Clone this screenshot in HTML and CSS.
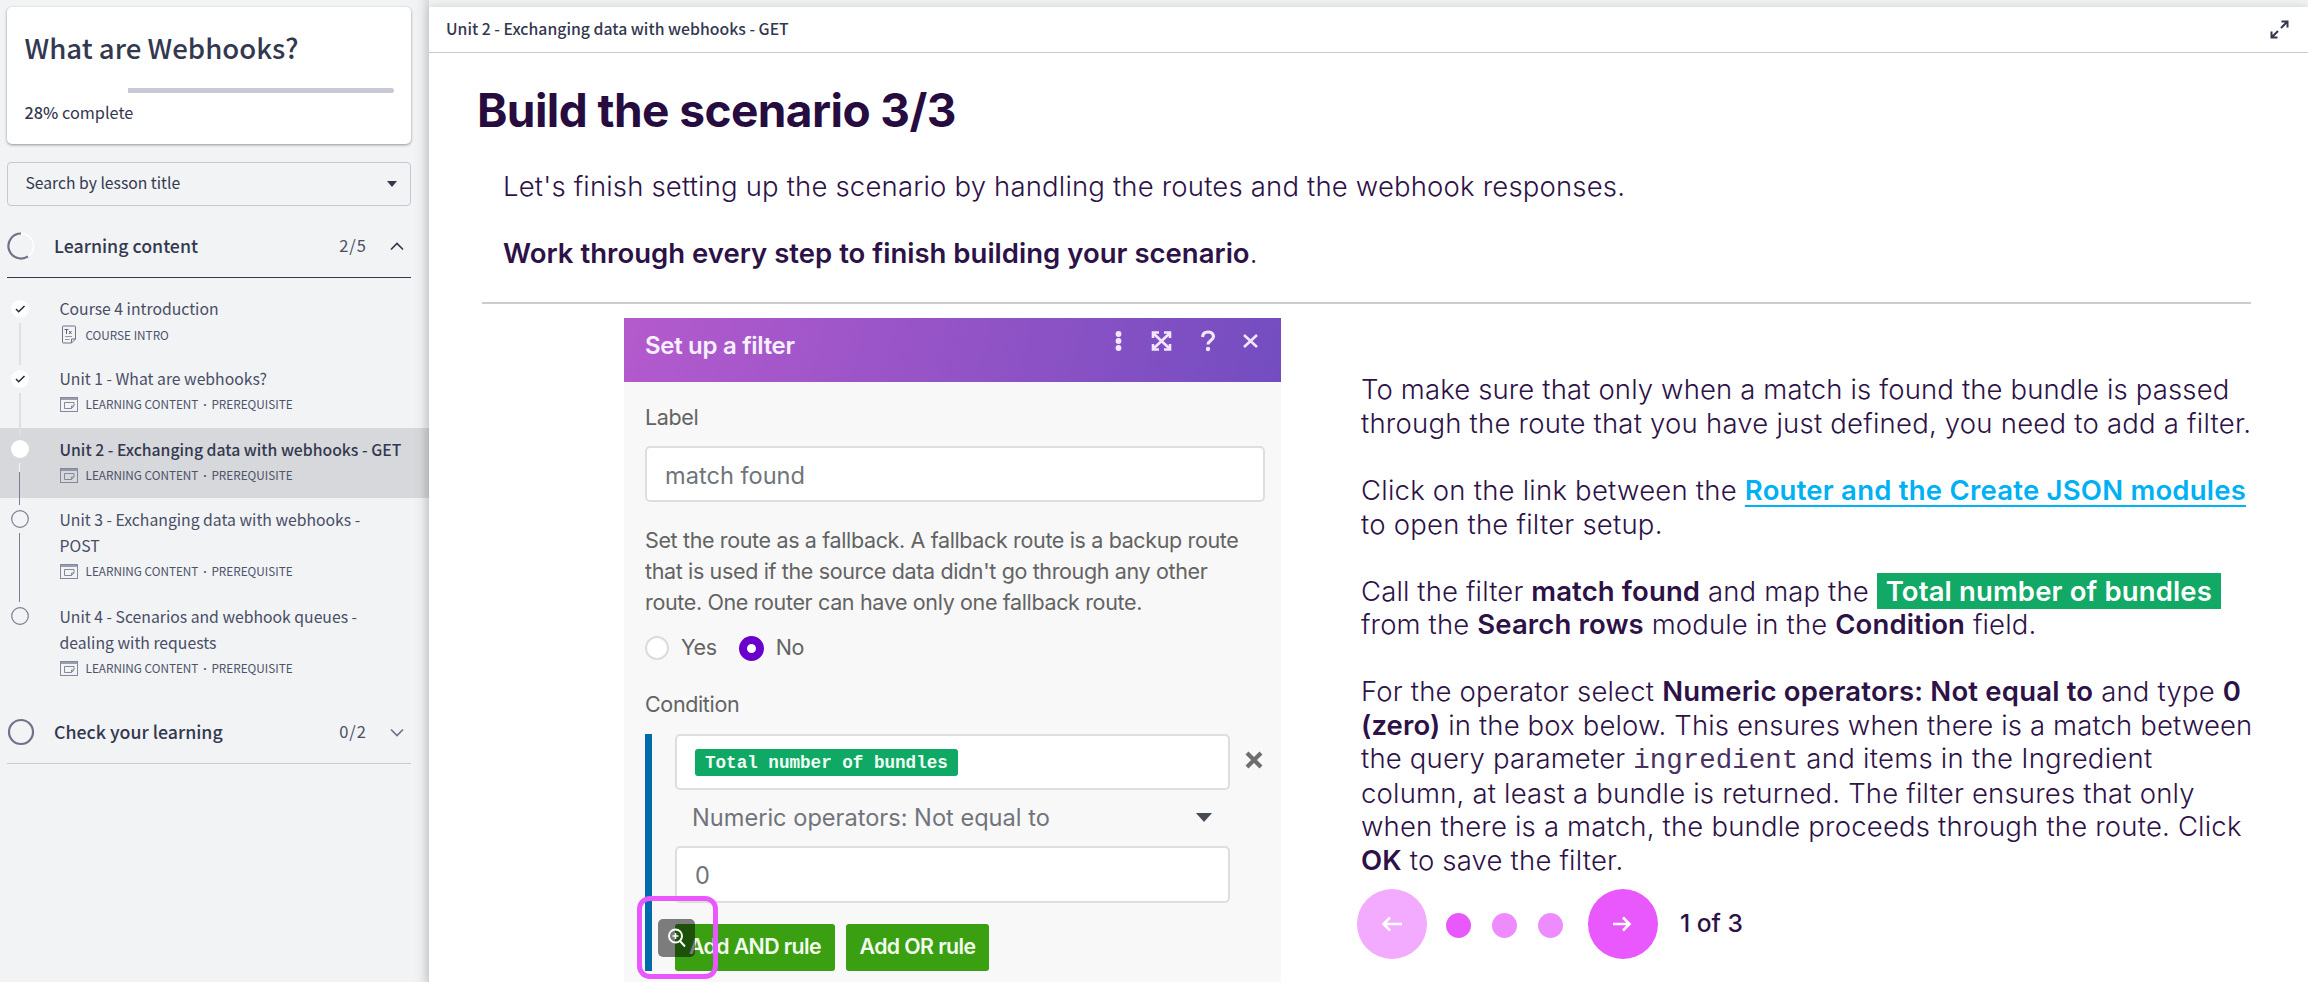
FILE: index.html
```html
<!DOCTYPE html>
<html lang="en">
<head>
<meta charset="utf-8">
<title>What are Webhooks?</title>
<link rel="stylesheet" href="styles.css">
</head>
<body>
<svg class="defs" width="0" height="0">
  <symbol id="lesson" viewBox="0 0 18 15"><g fill="none" stroke="currentColor"><rect x=".5" y=".5" width="17" height="14"/><path d="M1 2h16" stroke-width="1.600"/><path d="M4.500 5.500h9.500v3.500l-2.500 2.500h-7zM14 9h-2.500v2.500"/></g></symbol>
</svg>
<aside class="sidebar">
  <section class="card">
    <h2 class="course">What are Webhooks?</h2>
    <div class="progress"><div class="rest"></div></div>
    <div class="complete"><b>28%</b> complete</div>
  </section>
  <div class="search"><span>Search by lesson title</span><i class="caret"></i></div>
  <div class="section open">
    <svg class="ring" width="28" height="28" viewBox="0 0 28 28" fill="none"><circle cx="14" cy="14" r="12.500" stroke="#fff" stroke-width="1.500"/><path d="M14 1.500A12.500 12.500 0 1 0 21 24.300" stroke="#6f7288" stroke-width="2.200"/></svg>
    <span class="name">Learning content</span><span class="count">2/5</span>
    <svg class="chev" width="14" height="9" viewBox="0 0 14 9"><path d="M1 7.500 7 1.500l6 6" fill="none" stroke="#33384f" stroke-width="1.700"/></svg>
  </div>
  <ol class="lessons">
    <li class="item">
      <div class="mark"><svg class="dot" width="18" height="18"><circle cx="9" cy="9" r="9" fill="#fff"/><path d="M5 9l2.700 2.700L13.500 6" fill="none" stroke="#25283c" stroke-width="1.500"/></svg><i class="line done"></i></div>
      <div class="text"><div class="title">Course 4 introduction</div>
      <div class="meta"><svg class="doc" width="18" height="19" viewBox="0 0 18 19" fill="none"><path d="M3.500 1h11q1 0 1 1v12l-4 4h-8q-1 0-1-1V2q0-1 1-1zM15.500 14h-4v4" stroke="#6f7288"/><path d="M5 11.500h7M5 14.500h4.500" stroke="#9598a8"/><path d="M4.500 4.500h4M6.500 4.500V9M9 6l2.500 3M11.500 6 9 9" stroke="#5d6178"/></svg><span>COURSE INTRO</span></div></div>
    </li>
    <li class="item">
      <div class="mark"><svg class="dot" width="18" height="18"><circle cx="9" cy="9" r="9" fill="#fff"/><path d="M5 9l2.700 2.700L13.500 6" fill="none" stroke="#25283c" stroke-width="1.500"/></svg><i class="line done"></i></div>
      <div class="text"><div class="title">Unit 1 - What are webhooks?</div>
      <div class="meta"><svg class="ico" width="18" height="15"><use href="#lesson"/></svg><span>LEARNING CONTENT<i class="sep">·</i>PREREQUISITE</span></div></div>
    </li>
    <li class="item current">
      <div class="mark"><svg class="dot" width="18" height="18"><circle cx="9" cy="9" r="9" fill="#fff"/></svg><i class="line half"></i></div>
      <div class="text"><div class="title">Unit 2 - Exchanging data with webhooks - GET</div>
      <div class="meta"><svg class="ico" width="18" height="15"><use href="#lesson"/></svg><span>LEARNING CONTENT<i class="sep">·</i>PREREQUISITE</span></div></div>
    </li>
    <li class="item tall">
      <div class="mark"><svg class="dot" width="18" height="18"><circle cx="9" cy="9" r="8.300" fill="none" stroke="#7b7e92" stroke-width="1.200"/></svg><i class="line"></i></div>
      <div class="text"><div class="title">Unit 3 - Exchanging data with webhooks -<br>POST</div>
      <div class="meta"><svg class="ico" width="18" height="15"><use href="#lesson"/></svg><span>LEARNING CONTENT<i class="sep">·</i>PREREQUISITE</span></div></div>
    </li>
    <li class="item tall">
      <div class="mark"><svg class="dot" width="18" height="18"><circle cx="9" cy="9" r="8.300" fill="none" stroke="#7b7e92" stroke-width="1.200"/></svg></div>
      <div class="text"><div class="title">Unit 4 - Scenarios and webhook queues -<br>dealing with requests</div>
      <div class="meta"><svg class="ico" width="18" height="15"><use href="#lesson"/></svg><span>LEARNING CONTENT<i class="sep">·</i>PREREQUISITE</span></div></div>
    </li>
  </ol>
  <div class="section">
    <svg class="ring" width="28" height="28" viewBox="0 0 28 28" fill="none"><circle cx="14" cy="14" r="12" stroke="#6f7288" stroke-width="2.200"/></svg>
    <span class="name">Check your learning</span><span class="count">0/2</span>
    <svg class="chev" width="14" height="9" viewBox="0 0 14 9"><path d="M1 1.500 7 7.500l6-6" fill="none" stroke="#6f7288" stroke-width="1.700"/></svg>
  </div>
</aside>
<main class="main">
  <header class="bar"><span>Unit 2 - Exchanging data with webhooks - GET</span>
    <svg width="19" height="19" viewBox="0 0 19 19" fill="none" stroke="#33384f" stroke-width="2"><path d="M11.500 1.500h6v6M17 2l-6 6M7.500 17.500h-6v-6M2 17l6-6"/></svg>
  </header>
  <article class="page">
    <h1>Build the scenario 3/3</h1>
    <p class="lead">Let's finish setting up the scenario by handling the routes and the webhook responses.</p>
    <p class="lead second"><b>Work through every step to finish building your scenario</b>.</p>
    <hr class="rule">
    <div class="cols">
      <section class="filter">
        <header class="fhead"><span>Set up a filter</span>
          <svg width="144" height="24" viewBox="0 0 144 24" fill="none" stroke="#f1e6fa" stroke-width="2.600"><g fill="#f1e6fa" stroke="none"><circle cx="3.500" cy="5" r="2.900"/><circle cx="3.500" cy="12" r="2.900"/><circle cx="3.500" cy="19" r="2.900"/></g><path d="M38 4l17 16M55 4 38 20"/><path d="M38 9V3.500h6M49 3.500h6V9M55 15v5.500h-6M44 20.500h-6V15" stroke-width="2.600"/><path d="M87.500 8q.5-5 5.500-5t5.500 4.500c0 4-5.500 4-5.500 8" stroke-width="3.200"/><circle cx="93" cy="20" r="2.200" fill="#f1e6fa" stroke="none"/><path d="M129 6l13 12M142 6l-13 12"/></svg>
        </header>
        <div class="fbody">
          <div class="flabel">Label</div>
          <div class="input">match found</div>
          <p class="fnote">Set the route as a fallback. A fallback route is a backup route<br>that is used if the source data didn't go through any other<br>route. One router can have only one fallback route.</p>
          <div class="radios"><i class="radio"></i><span>Yes</span><i class="radio on"></i><span>No</span></div>
          <div class="flabel cond">Condition</div>
          <div class="rules">
            <div class="input short"><span class="tag">Total number of bundles</span>
              <svg class="remove" width="20" height="18" viewBox="0 0 20 18"><path d="M3 2l14 14M17 2 3 16" stroke="#6e6e6e" stroke-width="4.200" fill="none"/></svg></div>
            <div class="select"><span>Numeric operators: Not equal to</span><i class="fcaret"></i></div>
            <div class="input short zero">0</div>
            <div class="btns"><span class="btn and">Add AND rule</span><span class="btn or">Add OR rule</span></div>
            <div class="mag"><svg width="20" height="20" viewBox="0 0 20 20" fill="none" stroke="#fff" stroke-width="1.900"><circle cx="8.500" cy="8" r="6.500"/><path d="M13 13l5 5.500"/><path d="M5.500 8h6M8.500 5v6" stroke-width="1.600"/></svg></div>
            <div class="pink"></div>
          </div>
        </div>
      </section>
      <section class="steps">
        <p><span class="k1">To make sure that only when a match is found the bundle is passed</span><br><span class="k3">through the route that you have just defined, you need to add a filter.</span></p>
        <p><span class="k3">Click on the link between the <a class="link">Router and the Create JSON modules</a></span><br><span class="k3">to open the filter setup.</span></p>
        <p><span class="k1">Call the filter <b>match found</b> and map the <mark class="hl">Total number of bundles</mark></span><br><span class="k1">from the <b>Search rows</b> module in the <b>Condition</b> field.</span></p>
        <p><span class="k2">For the operator select <b>Numeric operators: Not equal to</b> and type <b>0</b></span><br><span class="k1"><b>(zero)</b> in the box below. This ensures when there is a match between</span><br><span class="k2">the query parameter </span><code>ingredient</code><span class="k4"> and items in the Ingredient</span><br><span class="k2">column, at least a bundle is returned. The filter ensures that only</span><br><span class="k2">when there is a match, the bundle proceeds through the route. Click</span><br><span class="k2"><b>OK</b> to save the filter.</span></p>
        <nav class="pager">
          <span class="arrow off"><svg width="20" height="16" viewBox="0 0 20 16"><path d="M8 1.500 1.500 8 8 14.500M2 8h18" fill="none" stroke="#fff" stroke-width="2.600"/></svg></span>
          <i class="pip on"></i><i class="pip"></i><i class="pip"></i>
          <span class="arrow"><svg width="20" height="16" viewBox="0 0 20 16"><path d="M10 1.500 16.500 8 10 14.500M16 8H-1" fill="none" stroke="#fff" stroke-width="2.600"/></svg></span>
          <span class="pos">1 of 3</span>
        </nav>
      </section>
    </div>
  </article>
</main>
</body>
</html>
```
FILE: styles.css
```css
* { box-sizing: border-box; }
body { margin: 0; width: 2308px; height: 982px; overflow: hidden; display: flex; background: #f1f3f5; color: #33384f; font-family: "Noto Sans CJK SC", "Open Sans", sans-serif; }
h1, h2, p, ol { margin: 0; padding: 0; list-style: none; }
.defs { position: absolute; }
.sidebar { width: 429px; height: 982px; flex: none; padding-top: 7px; background: linear-gradient(90deg, rgba(0,0,0,0) 413px, rgba(0,0,0,.02) 420px, rgba(0,0,0,.1) 429px), #f1f3f5; }
.card { width: 404px; height: 137px; margin-left: 7px; padding: 18px 17px 0 17.500px; background: #fff; border-radius: 5px; box-shadow: 0 1px 3px rgba(0,0,0,.4); }
.course { font-size: 27.600px; font-weight: 500; line-height: 44px; white-space: nowrap; }
.progress { height: 5px; margin-top: 19px; display: flex; justify-content: flex-end; }
.rest { width: 266px; background: #c7cad5; border-radius: 0 3px 3px 0; }
.complete { font-size: 16.300px; line-height: 26px; margin-top: 6px; }
.complete b { font-weight: 500; }
.search { width: 404px; height: 44px; margin: 18px 0 0 7px; padding: 0 13px 0 17.500px; border: 1px solid #c5c8d4; border-radius: 4px; display: flex; align-items: center; justify-content: space-between; font-size: 15.700px; line-height: 26px; }
.search span { padding-bottom: 2px; }
.caret { border: 5px solid transparent; border-top: 6px solid #33384f; border-bottom: 0; }
.section { width: 404px; height: 72px; margin-left: 7px; padding: 9px 7px 0 0; display: flex; align-items: center; border-bottom: 1px solid #c9cbd1; }
.section.open { border-bottom-color: #33384f; }
.name { margin-left: 19px; padding-bottom: 2px; flex: 1; font-size: 17.750px; font-weight: 500; line-height: 26px; }
.count { font-size: 16.500px; letter-spacing: 1px; margin-right: 23px; padding-bottom: 2px; line-height: 26px; color: #4b4f66; }
.lessons { margin-top: 10px; }
.item { height: 70px; display: flex; padding-left: 10.500px; }
.item.tall { height: 97px; }
.item.current { background: rgba(40,40,50,.13); }
.mark { width: 49px; display: flex; flex-direction: column; }
.dot { margin-top: 12px; flex: none; }
.line { width: 1px; margin: 5px 0 -7px 8.500px; flex: 1; background: #7b7e92; }
.line.done { width: 2px; margin-left: 8px; background: #dedfe2; }
.line.half { background: linear-gradient(#f4f4f6 9px, #7b7e92 9px); }
.text { flex: 1; padding-top: 8px; }
.current .text, .tall .text { padding-top: 9px; }
.title { font-size: 15.750px; line-height: 26px; color: #494d65; white-space: nowrap; }
.current .title { font-weight: 500; color: #33384f; }
.meta { display: flex; align-items: center; height: 24px; font-size: 11.750px; color: #4f536a; white-space: nowrap; }
.meta svg { margin-right: 8px; color: #85889a; }
.sep { display: inline-block; width: 13px; text-align: center; font: 700 12px "Noto Sans", sans-serif; }
.main { flex: 1; margin-top: 7px; background: #fff; box-shadow: 0 -1px 9px rgba(0,0,0,.12); }
.bar { height: 46px; padding: 0 19px 0 17px; display: flex; justify-content: space-between; align-items: center; border-bottom: 1px solid #c7cad5; font-size: 15.800px; font-weight: 500; }
.bar span { padding-bottom: 3px; }
.page { padding: 29px 0 0 53px; font-family: Inter, sans-serif; color: #2d1247; }
h1 { margin-left: -5px; font-size: 46px; line-height: 56px; font-weight: 700; letter-spacing: -.560px; color: #270d3f; }
.lead { margin: 31px 0 0 21px; font-size: 27.500px; line-height: 34px; font-weight: 300; letter-spacing: .175px; white-space: nowrap; }
.lead.second { margin-top: 33px; letter-spacing: .015px; }
b { font-weight: 600; }
.rule { width: 1769px; height: 2px; margin: 32px 0 0; border: 0; background: #cfcbcb; }
.cols { display: flex; margin-top: 14px; }
.filter { width: 657px; height: 664px; margin-left: 142px; background: #f8f8f8; color: #636363; font-size: 21.500px; line-height: 30px; letter-spacing: -.360px; }
.fhead { height: 64px; padding: 11px 22px 0 21px; display: flex; justify-content: space-between; font-size: 24px; font-weight: 600; letter-spacing: -.300px; color: #f6effc; background: linear-gradient(105deg, #b45acd, #734dc0); }
.fhead span { padding-top: 2px; }
.fbody { padding: 20px 16px 0 21px; }
.input { height: 56px; margin-top: 14px; padding: 3px 0 0 18px; display: flex; align-items: center; background: #fff; border: 2px solid #dedede; border-radius: 5px; font-size: 23.600px; letter-spacing: 0; color: #70747b; }
.fnote { margin-top: 23px; line-height: 31.200px; white-space: nowrap; }
.radios { display: flex; align-items: center; height: 25px; margin-top: 17px; }
.radios span { padding-bottom: 3px; }
.radio { width: 24px; height: 24px; border-radius: 50%; background: #fff; border: 2px solid #dcdcdc; margin-right: 12px; }
.radio.on { width: 25px; height: 25px; border: 8px solid #6a00cc; margin: 0 12px 0 22px; }
.cond { margin-top: 28px; }
.rules { position: relative; height: 237px; margin-top: 15px; padding-left: 23px; border-left: 7px solid #006baa; }
.short { position: relative; width: 555px; margin: 0; padding-top: 1px; }
.tag { height: 27px; padding: 0 10px; border-radius: 3px; background: #10a865; color: #f0fff6; font: bold 17.600px/29px "Liberation Mono", monospace; }
.remove { position: absolute; right: -36px; top: 15px; }
.select { width: 555px; height: 56px; padding: 0 18px 0 17px; display: flex; align-items: center; justify-content: space-between; font-size: 23.600px; letter-spacing: 0; color: #70747b; }
.fcaret { border: 8px solid transparent; border-top: 9px solid #454b52; border-bottom: 0; }
.zero { height: 57px; padding-top: 3px; }
.btns { display: flex; gap: 11px; margin-top: 21px; }
.btn { height: 47px; border-radius: 3px; background: #3aa011; color: #f3fbef; font-size: 21.300px; font-weight: 600; letter-spacing: -.600px; line-height: 45px; text-align: center; white-space: nowrap; }
.and { width: 160px; }
.or { width: 143px; }
.mag { position: absolute; left: 6px; top: 185px; width: 37px; height: 38px; border-radius: 5px; background: rgba(0,0,0,.5); display: grid; place-items: center; }
.pink { position: absolute; left: -15px; top: 162px; width: 81px; height: 83px; border: 5px solid #e858fd; border-radius: 13px; }
.steps { margin-left: 80px; padding-top: 55.300px; font-size: 27.500px; line-height: 33.570px; font-weight: 300; white-space: nowrap; }
.steps p { margin-bottom: 33.570px; }
.k1 { letter-spacing: .135px; }
.k2 { letter-spacing: .190px; }
.k3 { letter-spacing: .225px; }
.k4 { letter-spacing: .270px; }
.link { color: #00b0f5; font-weight: 600; text-decoration: underline 2px; text-underline-offset: 5px; text-decoration-skip-ink: none; }
.hl { background: #12a865; color: #fff; font-weight: 600; padding: 1px 9px; }
code { font: 27.500px/30.400px "Liberation Mono", monospace; color: #49325f; }
.steps p:last-of-type { margin-bottom: 0; }
.pager { display: flex; align-items: center; margin: 11px 0 0 -4px; }
.arrow { width: 70px; height: 70px; border-radius: 50%; background: #e858fd; display: grid; place-items: center; }
.arrow.off { background: #f2abff; }
.pip { width: 25px; height: 25px; margin: 4px 0 0 21px; border-radius: 50%; background: #ee8cff; }
.pip.on { background: #e858fd; margin-left: 19px; }
.pip + .arrow { margin-left: 25px; }
.pos { margin-left: 22px; font-size: 24.600px; font-weight: 500; }
```
